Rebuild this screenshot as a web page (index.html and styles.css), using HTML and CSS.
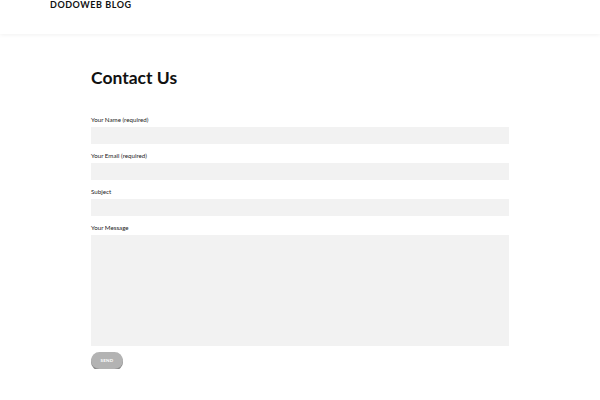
FILE: index.html
```html
<!DOCTYPE html>
<html>
<head>
<meta charset="utf-8">
<link rel="stylesheet" href="styles.css">
</head>
<body>
<header class="site-header">
  <div class="brand">DODOWEB BLOG</div>
</header>
<main class="content">
  <h1 class="title">Contact Us</h1>
  <form class="form">
    <label class="field">
      <span class="label">Your Name (required)</span>
      <input class="input" type="text">
    </label>
    <label class="field">
      <span class="label">Your Email (required)</span>
      <input class="input" type="text">
    </label>
    <label class="field">
      <span class="label">Subject</span>
      <input class="input" type="text">
    </label>
    <label class="field">
      <span class="label">Your Message</span>
      <textarea class="textarea"></textarea>
    </label>
    <div class="actions"><button type="button" class="send">SEND</button></div>
  </form>
</main>
</body>
</html>
```
FILE: styles.css
```css
html, body {
  margin: 0;
  padding: 0;
  background: #fff;
  font-family: Lato, "Liberation Sans", sans-serif;
  color: #111;
}
.site-header {
  height: 34px;
  background: #fff;
  box-shadow: 0 1px 4px rgba(0,0,0,0.06);
  padding-left: 50px;
  box-sizing: border-box;
}
.brand {
  font-weight: 700;
  font-size: 9px;
  letter-spacing: 0.55px;
  line-height: 10px;
  color: #111;
}
.content {
  width: 418px;
  margin: 0 auto;
  padding-top: 33px;
}
.title {
  margin: 0;
  font-size: 17.5px;
  font-weight: 700;
  line-height: 22px;
  color: #111;
}
.form {
  margin-top: 27px;
  display: flex;
  flex-direction: column;
  gap: 8px;
}
.field {
  display: flex;
  flex-direction: column;
  gap: 3px;
}
.label {
  font-size: 6.2px;
  line-height: 8px;
  color: #1a1a1a;
}
.input, .textarea {
  display: block;
  width: 100%;
  box-sizing: border-box;
  border: none;
  background: #f2f2f2;
  margin: 0;
  padding: 0;
  outline: none;
}
.input { height: 17px; }
.textarea { height: 111px; resize: none; }
.actions { display: flex; margin-top: -2px; }
.send {
  width: 32px;
  height: 16.5px;
  border: none;
  border-radius: 9px;
  background: #b3b3b3;
  box-shadow: 0 1.5px 0 #8a8a8a;
  color: #fff;
  font-family: Lato, "Liberation Sans", sans-serif;
  font-size: 4.5px;
  font-weight: 700;
  letter-spacing: 0.3px;
  padding: 0;
}
```
